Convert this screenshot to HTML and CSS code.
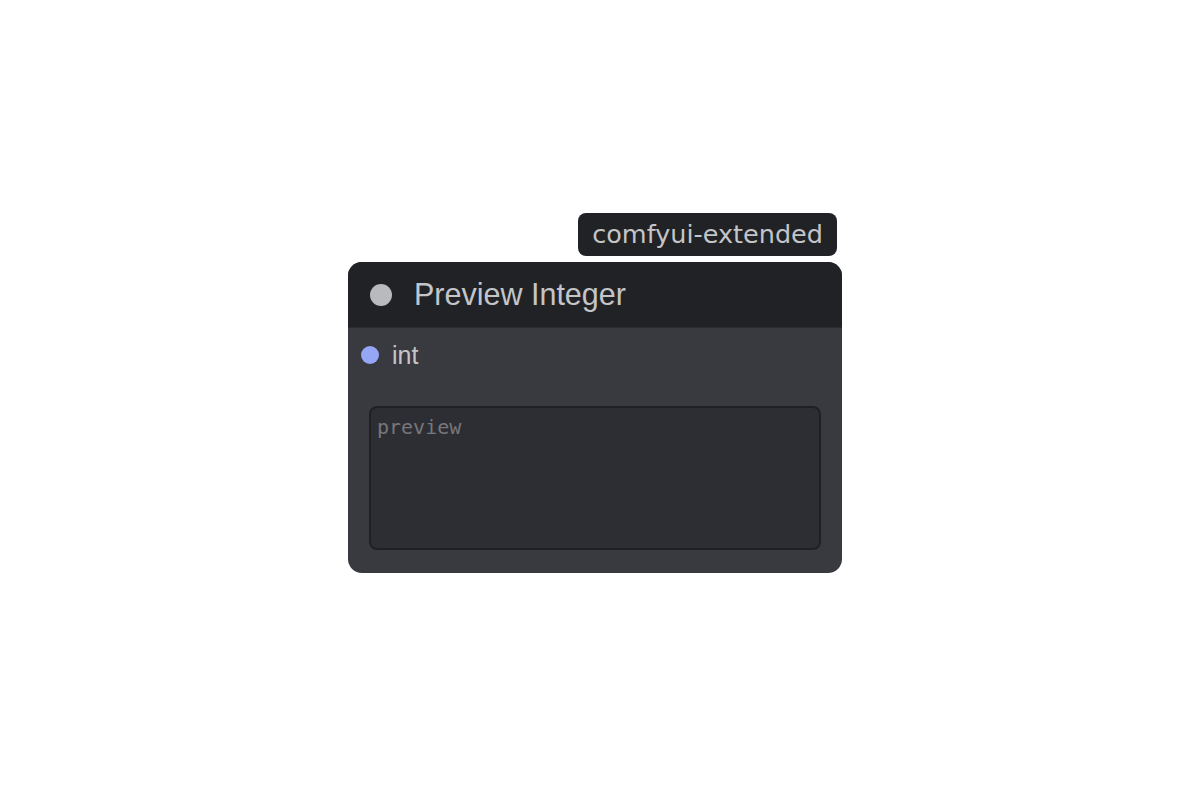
FILE: index.html
```html
<!DOCTYPE html>
<html>
<head>
<meta charset="utf-8">
<link rel="stylesheet" href="styles.css">
</head>
<body>
<div class="stage">
  <div class="wrap">
    <div class="badge-row"><span class="badge">comfyui-extended</span></div>
    <div class="node">
      <div class="header">
        <span class="dot"></span>
        <span class="title">Preview Integer</span>
      </div>
      <div class="body">
        <div class="input-row">
          <span class="slot"></span>
          <span class="label">int</span>
        </div>
        <div class="preview">preview</div>
      </div>
    </div>
  </div>
</div>
</body>
</html>
```
FILE: styles.css
```css
html, body { margin: 0; padding: 0; background: #ffffff; }
.stage { width: 1200px; height: 800px; position: relative; font-family: "Liberation Sans", Arial, sans-serif; }
.wrap { position: absolute; left: 348px; top: 213px; width: 494px; }
.badge-row { display: flex; justify-content: flex-end; padding-right: 5px; margin-bottom: 6px; }
.badge { background: #212226; color: #c4c5c9; font-family: "DejaVu Sans", sans-serif; font-size: 25.5px; line-height: 43px; height: 43px; padding: 0 14px 0 14px; border-radius: 8px; }
.node { background: #393a3f; border-radius: 14px; overflow: hidden; height: 311px; }
.header { background: #212226; height: 65px; display: flex; align-items: center; padding-left: 22px; border-bottom: 1px solid #2a2b2f; }
.dot { width: 22px; height: 22px; border-radius: 50%; background: #b9babe; margin-right: 22px; }
.title { color: #c4c5c9; font-size: 30.5px; }
.body { padding: 12px 21px 0 21px; }
.input-row { display: flex; align-items: center; margin-left: -8px; height: 30px; }
.slot { width: 18px; height: 18px; border-radius: 50%; background: #94a6f5; margin-right: 13px; }
.label { color: #c4c5c9; font-size: 25px; }
.preview { margin-top: 36px; height: 144px; box-sizing: border-box; border: 2px solid #1f2024; border-radius: 8px; background: #2d2e33; color: #77777b; font-family: "DejaVu Sans Mono", monospace; font-size: 20px; padding: 7px 6px; }
```
